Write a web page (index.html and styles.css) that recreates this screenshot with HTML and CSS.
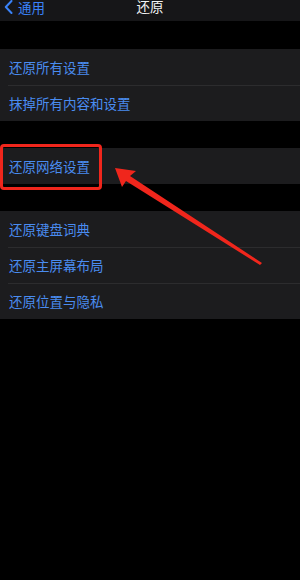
FILE: index.html
```html
<!DOCTYPE html>
<html lang="zh-CN">
<head>
    <meta charset="UTF-8">
    <meta name="viewport" content="width=device-width, initial-scale=1.0">
    <title>还原</title>
    <link rel="stylesheet" href="styles.css">
</head>
<body>
    <div class="navbar">
        <div class="back">
            <svg class="chevron" width="9" height="14" viewBox="0 0 9 14">
                <path d="M7.5 1 L1.8 7 L7.5 13" fill="none" stroke="#3a82f7" stroke-width="2" stroke-linecap="round" stroke-linejoin="round"/>
            </svg>
            <span>通用</span>
        </div>
        <div class="title">还原</div>
    </div>

    <!-- Reset groups -->
    <div class="group group-first">
        <div class="row">还原所有设置</div>
        <div class="row">抹掉所有内容和设置</div>
    </div>

    <div class="group">
        <div class="row row-marked">还原网络设置</div>
    </div>

    <div class="group">
        <div class="row">还原键盘词典</div>
        <div class="row">还原主屏幕布局</div>
        <div class="row">还原位置与隐私</div>
    </div>

    <svg class="arrow" width="300" height="580" viewBox="0 0 300 580">
        <polygon points="115,168 136,171 130,176 262,263 260,265 126,181 122,187" fill="#f0261c"/>
    </svg>
</body>
</html>
```
FILE: styles.css
```css
body {
    background-color: #000000;
    color: #ffffff;
    font-family: "Noto Sans CJK SC", "Noto Sans", sans-serif;
    margin: 0;
    position: relative;
    min-height: 580px;
}
.navbar {
    background-color: #161618;
    height: 21px;
    position: relative;
    display: flex;
    align-items: flex-start;
}
.back {
    display: flex;
    align-items: center;
    gap: 5px;
    padding-left: 4px;
    color: #3a82f7;
    font-size: 13.5px;
    line-height: 14px;
    margin-top: 0;
}
.chevron {
    display: block;
}
.title {
    position: absolute;
    left: 0;
    right: 0;
    top: 0;
    text-align: center;
    font-size: 13.5px;
    line-height: 13px;
    color: #f2f2f2;
}
.group {
    background-color: #1c1c1e;
    margin-top: 27px;
}
.group-first {
    margin-top: 28px;
}
.row {
    height: 36px;
    line-height: 36px;
    padding-left: 9px;
    font-size: 13.5px;
    color: #4a8cf0;
    position: relative;
}
.row + .row::before {
    content: "";
    position: absolute;
    left: 8px;
    right: 0;
    top: 0;
    border-top: 1px solid #2c2c2e;
}
.row-marked::after {
    content: "";
    position: absolute;
    left: 0;
    top: -4px;
    width: 96px;
    height: 40px;
    border: 3px solid #f0261c;
    border-radius: 4px;
}
.arrow {
    position: absolute;
    left: 0;
    top: 0;
    pointer-events: none;
}
```
